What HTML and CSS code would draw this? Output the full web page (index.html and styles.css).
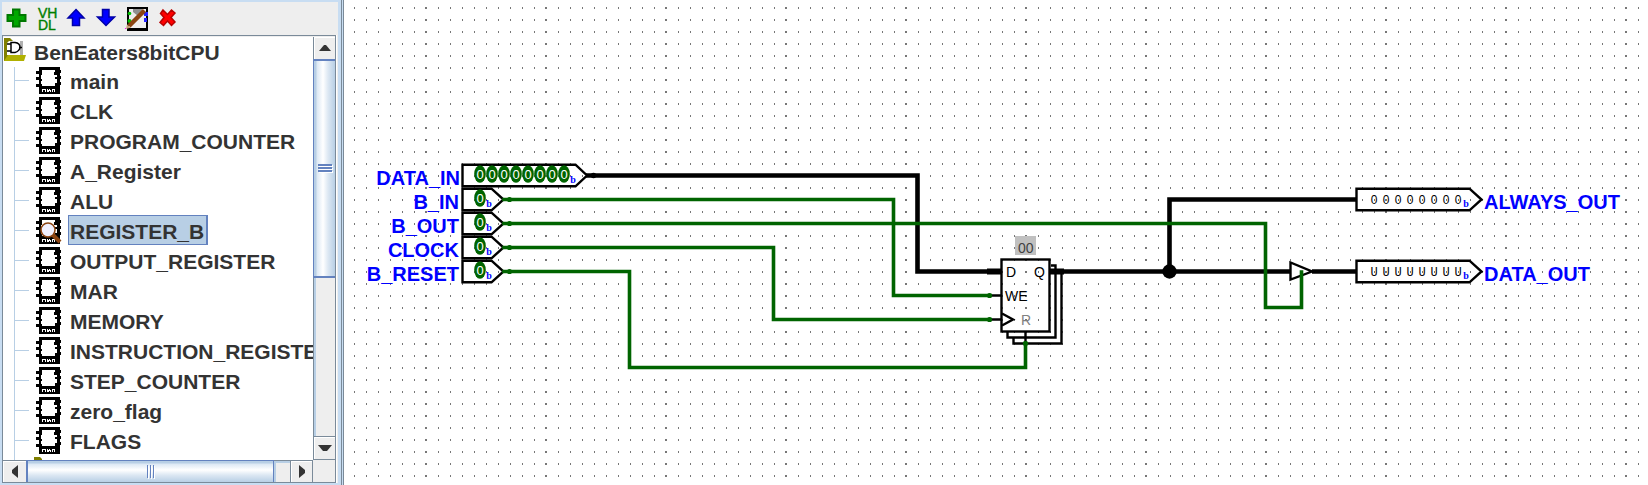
FILE: index.html
```html
<!DOCTYPE html>
<html lang="en">
<head>
<meta charset="utf-8">
<title>BenEaters8bitCPU</title>
<link rel="stylesheet" href="styles.css">
</head>
<body>
<svg class="defs" width="0" height="0" aria-hidden="true">
  <symbol id="chip" viewBox="0 0 26 27">
    <path d="M3 0H24V27H3Z"/>
    <path d="M0 4H3V7H0ZM0 10H3V13H0ZM0 17H3V20H0ZM24 3H25V6H24ZM24 9H25V12H24ZM24 15H25V18H24Z"/>
    <path fill="#fff" d="M6 3H19V5H18V8H21V10H19V12H21V16H19V19H6V17H5V14H6V12H5V8H6Z"/>
    <path fill="#fff" d="M6 22H10V25H9V23H7V25H6ZM11 22H12V23H13V22H14V23H15V25H14V24H13V25H12V25H11ZM16 22H19V25H18V23H17V25H16Z"/>
  </symbol>
  <symbol id="lens" viewBox="0 0 26 27">
    <path d="M16 17L24 25" stroke="#8b4513" stroke-width="4"/>
    <circle cx="12" cy="13" r="7" fill="#f0f0ff" stroke="#8b4513" stroke-width="1.6"/>
  </symbol>
</svg>

<aside class="explorer">
  <div class="toolbar" role="toolbar">
    <button class="tool" aria-label="Add circuit"><svg width="24" height="28" viewBox="5 3 24 28"><path d="M13 9.500H19.500V15H25.500V21H19.500V26.500H13V21H7.500V15H13Z" fill="#00a800" stroke="#007800" stroke-width="2"/></svg></button>
    <button class="tool" aria-label="Add VHDL"><svg class="vhdl" width="24" height="28" viewBox="35 3 24 28"><text x="38" y="18">VH</text><text x="38" y="30">DL</text></svg></button>
    <button class="tool" aria-label="Move up"><svg width="24" height="28" viewBox="65 3 24 28"><path d="M76 9.500L84 18H79.500V25.500H72.500V18H68Z" fill="#00f" stroke="#0000a8" stroke-width="1.500"/></svg></button>
    <button class="tool" aria-label="Move down"><svg width="24" height="28" viewBox="95 3 24 28"><path d="M106 25.500L97.500 17H102.500V9.500H109V17H114.500Z" fill="#00f" stroke="#0000a8" stroke-width="1.500"/></svg></button>
    <button class="tool" aria-label="Edit appearance"><svg width="26" height="28" viewBox="125 3 26 28"><path d="M127 7H148V31H127Z"/><path d="M129 9H146V28H129Z" fill="#eee"/><path d="M133 9H142L144 13 138 16 133 12Z" fill="#909090"/><circle cx="129.500" cy="13.500" r="1.800" fill="#00c000"/><circle cx="129.500" cy="21" r="2" fill="#00c000"/><path d="M144 12H148V16H144ZM144 18H147V22H144Z" fill="#22f"/><path d="M129 26L144.500 10.500" stroke="#8b4513" stroke-width="4.500"/><path d="M126 29L127 24.500 131 27.500Z" fill="#c8a078"/><path d="M125 28H126V29H125Z" fill="#f0f"/></svg></button>
    <button class="tool" aria-label="Delete circuit"><svg width="24" height="28" viewBox="157 3 24 28"><path d="M163 10L167.500 14.500 171.500 10 175 13 171 17.500 175 22 171.500 25.500 167.500 21 163.500 25.500 160 22.500 164 17.500 160.500 13.500Z" fill="#f00" stroke="#b80000" stroke-width="1.500"/></svg></button>
  </div>

  <div class="pane">
    <nav class="tree">
      <a class="root" href="#project"><svg width="23" height="24" viewBox="4 38 23 24"><path d="M4 38H10L13 41V61H4Z" fill="#808000"/><path d="M7 43L9 41H22V55H7Z" fill="#fff"/><path d="M20 41H23V55H20Z" fill="#b0b0b0"/><path d="M7 44H11M7 51H11M11 42.500H15C19 43 20 46 20 47.500S18 52 15 52.500H11ZM19 47.500H22" fill="none" stroke="#000" stroke-width="1.500"/><path d="M8 55H26L24 61H4Z" fill="#b0b000"/></svg><span>BenEaters8bitCPU</span></a>
      <ul class="circuits">
        <li><a href="#main"><svg class="icon"><use href="#chip"/></svg><span>main</span></a></li>
        <li><a href="#clk"><svg class="icon"><use href="#chip"/></svg><span>CLK</span></a></li>
        <li><a href="#pc"><svg class="icon"><use href="#chip"/></svg><span>PROGRAM_COUNTER</span></a></li>
        <li><a href="#a"><svg class="icon"><use href="#chip"/></svg><span>A_Register</span></a></li>
        <li><a href="#alu"><svg class="icon"><use href="#chip"/></svg><span>ALU</span></a></li>
        <li><a href="#b" class="selected" aria-current="true"><svg class="icon"><use href="#chip"/><use href="#lens"/></svg><span>REGISTER_B</span></a></li>
        <li><a href="#out"><svg class="icon"><use href="#chip"/></svg><span>OUTPUT_REGISTER</span></a></li>
        <li><a href="#mar"><svg class="icon"><use href="#chip"/></svg><span>MAR</span></a></li>
        <li><a href="#memory"><svg class="icon"><use href="#chip"/></svg><span>MEMORY</span></a></li>
        <li><a href="#ir"><svg class="icon"><use href="#chip"/></svg><span>INSTRUCTION_REGISTER</span></a></li>
        <li><a href="#step"><svg class="icon"><use href="#chip"/></svg><span>STEP_COUNTER</span></a></li>
        <li><a href="#zero"><svg class="icon"><use href="#chip"/></svg><span>zero_flag</span></a></li>
        <li><a href="#flags"><svg class="icon"><use href="#chip"/></svg><span>FLAGS</span></a></li>
        <li class="library"><svg width="8" height="4" viewBox="0 0 8 4"><path d="M0 0H6L8 2V4H0Z" fill="#808000"/></svg></li>
      </ul>
    </nav>
    <div class="vbar">
      <button class="arrow" aria-label="Scroll up"><svg width="12" height="6" viewBox="0 0 12 6"><path d="M0 6L5 0H7L12 6Z"/></svg></button>
      <div class="vthumb"><i></i><i></i><i></i></div>
      <div class="vtrack"></div>
      <button class="arrow down" aria-label="Scroll down"><svg width="14" height="6" viewBox="0 0 14 6"><path d="M0 0H14L9 6H5Z"/></svg></button>
    </div>
    <div class="hbar">
      <button class="arrow left" aria-label="Scroll left"><svg width="6" height="13" viewBox="0 0 6 13"><path d="M6 0V13L0 8V5Z"/></svg></button>
      <div class="hthumb"><i></i><i></i><i></i></div>
      <div class="htrack"></div>
      <button class="arrow right" aria-label="Scroll right"><svg width="6" height="13" viewBox="0 0 6 13"><path d="M0 0V13L6 8V5Z"/></svg></button>
    </div>
    <div class="corner"></div>
  </div>
</aside>
<div class="splitter"></div>

<main class="canvas">
<svg class="schematic" width="100%" height="100%">
  <defs>
    <pattern id="grid" width="120" height="12" patternUnits="userSpaceOnUse" x="76" y="7">
      <path fill="#777" d="M5 0H7V2H5ZM18 0H19V2H18ZM30 0H31V2H30ZM42 0H43V2H42ZM54 0H55V2H54ZM66 0H67V2H66ZM78 0H79V2H78ZM90 0H91V2H90ZM102 0H103V2H102ZM114 0H115V2H114Z"/>
    </pattern>
    <g id="bit"><ellipse cx="0" cy="0" rx="5.800" ry="8.800"/><text class="digit" x="0" y="5">0</text></g>
    <path id="inpin" d="M462.500 -10.800H491.500L503.500 0L491.500 10.800H462.500Z"/>
    <path id="outpin" d="M1356.500 -10.800H1469.500L1481.500 0L1469.500 10.800H1356.500Z"/>
  </defs>
  <rect x="6" width="100%" height="100%" fill="url(#grid)"/>
  <g transform="translate(-344 0)">
    <g class="bus">
      <path d="M586 175.500H917.500V271.500H1001"/>
      <path d="M1050 271.500H1290"/>
      <path d="M1169.500 271.500V199.500H1356"/>
      <path d="M1312 271.500H1356"/>
      <path class="stub" d="M987 271.500H1001M1050 271.500H1064"/>
    </g>
    <circle cx="1169.500" cy="271.500" r="7.200"/>
    <g class="outline">
      <path d="M1007.500 332V337.500H1055.500V265.500H1051"/>
      <path d="M1013.500 338V343.500H1061.500V271.500"/>
      <rect x="1001.500" y="259.500" width="48" height="72"/>
      <path d="M1002 313.500L1013 319.500L1002 325.500"/>
      <path d="M989 295.500H1001M989 319.500H1001M1025.500 332V343"/>
      <path d="M1290.500 262.500V279.500L1312 271.500Z"/>
      <path d="M462.500 164.700H575.500L587 175.500L575.500 186.300H462.500Z"/>
      <use href="#inpin" y="199.500"/><use href="#inpin" y="223.500"/><use href="#inpin" y="247.500"/><use href="#inpin" y="271.500"/>
      <use href="#outpin" y="199.500"/><use href="#outpin" y="271.500"/>
    </g>
    <g class="wire">
      <path d="M504 199.500H893.500V295.500H990"/>
      <path d="M504 223.500H1265.500V307.500H1301.500V272"/>
      <path d="M504 247.500H773.500V319.500H990"/>
      <path d="M504 271.500H629.500V367.500H1025.500V343"/>
    </g>
    <g class="node">
      <circle cx="509.500" cy="199.500" r="2.600"/><circle cx="509.500" cy="223.500" r="2.600"/><circle cx="509.500" cy="247.500" r="2.600"/><circle cx="509.500" cy="271.500" r="2.600"/>
      <circle cx="989.500" cy="295.500" r="2.600"/><circle cx="989.500" cy="319.500" r="2.600"/><circle cx="1025.500" cy="343.500" r="2.600"/>
    </g>
    <circle cx="593.500" cy="175.500" r="2.800"/>
    <g class="node">
      <use href="#bit" x="480" y="174"/><use href="#bit" x="492" y="174"/><use href="#bit" x="504" y="174"/><use href="#bit" x="516" y="174"/><use href="#bit" x="528" y="174"/><use href="#bit" x="540" y="174"/><use href="#bit" x="552" y="174"/><use href="#bit" x="564" y="174"/>
      <use href="#bit" x="480" y="198"/><use href="#bit" x="480" y="222"/><use href="#bit" x="480" y="246"/><use href="#bit" x="480" y="270"/>
    </g>
    <g class="radix">
      <text x="573" y="183">b</text><text x="489" y="207">b</text><text x="489" y="231">b</text><text x="489" y="255">b</text><text x="489" y="279">b</text>
      <text x="1466" y="207">b</text><text x="1466" y="279">b</text>
    </g>
    <g class="value">
      <text x="1374" y="204">0</text><text x="1386" y="204">0</text><text x="1398" y="204">0</text><text x="1410" y="204">0</text><text x="1422" y="204">0</text><text x="1434" y="204">0</text><text x="1446" y="204">0</text><text x="1458" y="204">0</text>
      <g class="undefined"><text x="1374" y="276">U</text><text x="1386" y="276">U</text><text x="1398" y="276">U</text><text x="1410" y="276">U</text><text x="1422" y="276">U</text><text x="1434" y="276">U</text><text x="1446" y="276">U</text><text x="1458" y="276">U</text></g>
    </g>
    <g class="port">
      <rect x="1015" y="236" width="21" height="19" fill="#c0c0c0"/>
      <text class="content" x="1018" y="253">00</text>
      <text x="1006" y="277">D</text><text x="1034" y="277">Q</text><text x="1005" y="301">WE</text><text class="reset" x="1021" y="325">R</text>
    </g>
    <g class="label end">
      <text x="460" y="185">DATA_IN</text><text x="459" y="209">B_IN</text><text x="459" y="233">B_OUT</text><text x="459" y="257">CLOCK</text><text x="459" y="281">B_RESET</text>
    </g>
    <g class="label">
      <text x="1484" y="209">ALWAYS_OUT</text><text x="1484" y="281">DATA_OUT</text>
    </g>
  </g>
</svg>
</main>
</body>
</html>
```
FILE: styles.css
```css
* { box-sizing: border-box; }

body {
  margin: 0;
  height: 100vh;
  display: flex;
  overflow: hidden;
  background: #fff;
  color: #333;
  font-family: "Liberation Sans", Arial, sans-serif;
}

button {
  margin: 0;
  padding: 0;
  border: 0;
  background: none;
}

svg {
  display: block;
  flex: none;
}

.defs { position: absolute; }

/* Explorer panel */
.explorer {
  flex: none;
  width: 341px;
  padding: 2px 3px 0 2px;
  display: flex;
  flex-direction: column;
  background: #c8ddf2;
}

.toolbar {
  height: 33px;
  padding: 1px 3px;
  display: flex;
  gap: 6px;
  background: #eee;
}

.tool { height: 28px; }

.vhdl {
  overflow: visible;
  fill: #008000;
  stroke: #008000;
  stroke-width: 0.4;
  font-size: 14px;
}

.pane {
  flex: 1;
  min-height: 0;
  display: grid;
  grid-template-columns: minmax(0, 1fr) 22px;
  grid-template-rows: minmax(0, 1fr) 22px;
  border: 1px solid #7a8a99;
  padding-top: 1px;
  background: #eee;
  box-shadow: 1px 0 #fff, 2px 0 #eee;
  margin: 0 2px 2px 0;
}

.tree {
  overflow: hidden;
  background: #fff;
  font-size: 21px;
  font-weight: bold;
  white-space: nowrap;
}

.tree a {
  color: inherit;
  text-decoration: none;
}

.root {
  height: 30px;
  padding: 1px 0 0 1px;
  display: flex;
  align-items: flex-start;
  gap: 7px;
  line-height: 30px;
}

.circuits {
  margin: 0;
  padding: 0;
  list-style: none;
  background: linear-gradient(#b8cfe5, #b8cfe5) 11px 0 / 1px 100% no-repeat;
}

.circuits li {
  height: 30px;
  padding-left: 33px;
  background: linear-gradient(#b8cfe5, #b8cfe5) 11px 13px / 15px 1px no-repeat;
}

.circuits a {
  height: 30px;
  display: flex;
  align-items: flex-start;
  gap: 6px;
}

.circuits a span {
  height: 30px;
  margin-top: -2px;
  padding: 0 2px 0 1px;
  border: 1px solid transparent;
  border-right-width: 2px;
  line-height: 32px;
}

.circuits .selected span {
  border-color: #6382bf;
  background: #b8cfe5;
}

.circuits .library {
  padding-left: 31px;
  background: none;
}

.icon {
  width: 26px;
  height: 27px;
}

/* Scroll bars */
.arrow {
  flex: none;
  display: flex;
  align-items: center;
  justify-content: center;
  background: #eee;
  box-shadow: inset 1px 1px #fff;
}

.arrow svg { fill: #333; }

.vbar {
  display: flex;
  flex-direction: column;
  border-left: 1px solid #7a8a99;
}

.vbar .arrow { height: 22px; }

.vthumb {
  flex: 217;
  margin-left: -1px;
  display: flex;
  flex-direction: column;
  align-items: center;
  justify-content: center;
  gap: 1px;
  border: solid #6382bf;
  border-width: 2px 0 2px 1px;
  background: linear-gradient(90deg, #b8cfe5 2px, #dce8f4 3px, #fff 9px, #dde8f3 14px, #b8cfe5);
}

.vthumb i {
  width: 14px;
  height: 2px;
  background: #6382bf;
  box-shadow: 1px 1px #fff;
}

.vtrack {
  flex: 160;
  border-left: 2px solid #b8cfe5;
}

.vbar .down {
  height: 24px;
  border: solid #7a8a99;
  border-width: 1px 0;
}

.hbar {
  display: flex;
  border-top: 1px solid #7a8a99;
}

.hbar .arrow { width: 23px; }

.hthumb {
  flex: 249;
  margin-top: -1px;
  display: flex;
  align-items: center;
  justify-content: center;
  gap: 2px;
  border: solid #6382bf;
  border-width: 1px 1px 0 2px;
  background: linear-gradient(#b8cfe5 2px, #dce8f4 3px, #fff 9px, #dde8f3 14px, #b8cfe5);
}

.hthumb i {
  width: 1px;
  height: 13px;
  background: #6382bf;
  box-shadow: 1px 1px #fff;
}

.htrack {
  flex: 14;
  border: solid #b8cfe5;
  border-width: 2px 0 0 2px;
}

.hbar .right {
  border: solid #7a8a99;
  border-width: 0 1px;
}

.corner { background: #eee; }

.splitter {
  flex: none;
  width: 3px;
  border: solid #7a8a99;
  border-width: 0 1px;
  background: #c8ddf2;
}

/* Schematic */
.canvas {
  flex: 1;
  min-width: 0;
}

.bus {
  fill: none;
  stroke: #000;
  stroke-width: 4.6;
}

.bus .stub { stroke-width: 6; }

.outline {
  fill: none;
  stroke: #000;
  stroke-width: 2.4;
}

.wire {
  fill: none;
  stroke: #006400;
  stroke-width: 3.6;
  stroke-linecap: square;
}

.node { fill: #006400; }

.digit {
  fill: #fff;
  font-size: 13px;
  text-anchor: middle;
}

.radix {
  fill: #00f;
  font-family: "Liberation Serif", serif;
  font-size: 10px;
  font-weight: bold;
  text-anchor: middle;
}

.value {
  font-size: 12px;
  text-anchor: middle;
}

.undefined { font-family: "Liberation Mono", monospace; }

.port { font-size: 14px; }
.content { fill: #404040; }
.reset { fill: #808080; }

.label {
  fill: #00f;
  font-size: 20px;
  font-weight: bold;
}

.end { text-anchor: end; }
```
